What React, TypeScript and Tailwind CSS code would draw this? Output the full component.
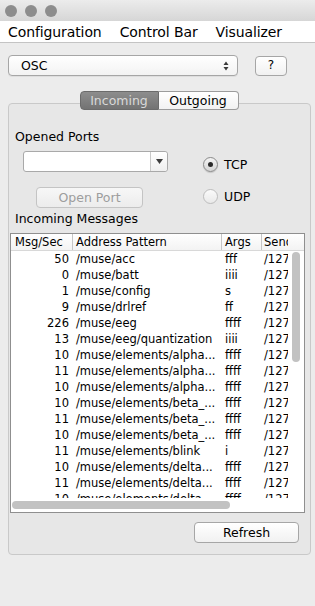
import React from 'react';

const rows: [string, string, string][] = [
  ['50', '/muse/acc', 'fff'],
  ['0', '/muse/batt', 'iiii'],
  ['1', '/muse/config', 's'],
  ['9', '/muse/drlref', 'ff'],
  ['226', '/muse/eeg', 'ffff'],
  ['13', '/muse/eeg/quantization', 'iiii'],
  ['10', '/muse/elements/alpha...', 'ffff'],
  ['11', '/muse/elements/alpha...', 'ffff'],
  ['10', '/muse/elements/alpha...', 'ffff'],
  ['10', '/muse/elements/beta_...', 'ffff'],
  ['11', '/muse/elements/beta_...', 'ffff'],
  ['10', '/muse/elements/beta_...', 'ffff'],
  ['11', '/muse/elements/blink', 'i'],
  ['10', '/muse/elements/delta...', 'ffff'],
  ['11', '/muse/elements/delta...', 'ffff'],
  ['10', '/muse/elements/delta...', 'ffff'],
];

const Radio: React.FC<{ checked?: boolean; label: string }> = ({ checked, label }) => (
  <div className="flex items-center h-[15px]">
    <div
      className={`w-[15px] h-[15px] rounded-full border flex items-center justify-center ${
        checked
          ? 'border-[#8a8a8a] bg-gradient-to-b from-[#f4f4f4] to-[#d6d6d6] shadow-[0_1px_1px_rgba(0,0,0,0.15)]'
          : 'border-[#bdbdbd] bg-gradient-to-b from-[#fbfbfb] to-[#e9e9e9]'
      }`}
    >
      {checked && <div className="w-[5px] h-[5px] rounded-full bg-[#2a2a2a]" />}
    </div>
    <span className="ml-[6px] text-[12.5px] leading-[15px] text-black">{label}</span>
  </div>
);

export default function App() {
  return (
    <div className="w-[315px] h-[606px] overflow-hidden bg-[#ececec] text-black font-['DejaVu_Sans',sans-serif]">
      {/* title bar */}
      <div className="h-[21px] bg-gradient-to-b from-[#ececec] to-[#d6d6d6] flex items-center pl-[5px] gap-[8px]">
        <div className="w-[12px] h-[12px] rounded-full bg-[#8d8d8d]" />
        <div className="w-[12px] h-[12px] rounded-full bg-[#8d8d8d]" />
        <div className="w-[12px] h-[12px] rounded-full bg-[#8d8d8d]" />
      </div>

      {/* menu bar */}
      <div className="h-[22px] bg-white border-b border-[#c4c4c4] flex items-center px-[8px] gap-[18px] text-[14px] leading-[20px] tracking-[-0.1px]">
        <span>Configuration</span>
        <span>Control Bar</span>
        <span>Visualizer</span>
      </div>

      {/* protocol chooser */}
      <div className="flex items-center mt-[12px] ml-[8px]">
        <div className="w-[230px] h-[21px] rounded-[4px] border border-[#a6a6a6] bg-gradient-to-b from-white to-[#f3f3f3] shadow-[0_1px_0_rgba(0,0,0,0.06)] flex items-center pl-[12px] pr-[8px]">
          <span className="text-[12.5px] leading-[15px] flex-1">OSC</span>
          <svg width="6" height="10" viewBox="0 0 6 10">
            <path d="M3 0.5 L5.5 4 L0.5 4 Z" fill="#3a3a3a" />
            <path d="M3 9.5 L5.5 6 L0.5 6 Z" fill="#3a3a3a" />
          </svg>
        </div>
        <div className="ml-[17px] w-[32px] h-[20px] rounded-[4px] border border-[#a6a6a6] bg-gradient-to-b from-white to-[#f1f1f1] flex items-center justify-center text-[12px] leading-[15px]">
          ?
        </div>
      </div>

      {/* tabs */}
      <div className="relative z-10 mt-[15px] ml-[8px] w-[302px] flex justify-center">
        <div className="flex h-[19px] text-[12.5px] leading-[17px]">
          <div className="w-[79px] rounded-l-[4px] border border-[#6b6b6b] bg-gradient-to-b from-[#8d8d8d] to-[#737373] text-[#d9d9d9] flex items-center justify-center">
            Incoming
          </div>
          <div className="w-[80px] rounded-r-[4px] border border-l-0 border-[#9c9c9c] bg-gradient-to-b from-white to-[#f2f2f2] flex items-center justify-center">
            Outgoing
          </div>
        </div>
      </div>

      {/* panel */}
      <div className="-mt-[7px] ml-[8px] w-[303px] rounded-[4px] border border-[#c9c9c9] bg-[#e7e7e7] pt-[25px] pb-[11px] flex flex-col">
        <div className="pl-[6px] text-[12.5px] leading-[16px]">Opened Ports</div>

        <div className="flex mt-[6px]">
          <div className="flex flex-col ml-[14px]">
            <div className="w-[145px] h-[21px] rounded-[3px] border border-[#a9a9a9] bg-white flex">
              <div className="flex-1" />
              <div className="w-[17px] border-l border-[#c9c9c9] bg-gradient-to-b from-white to-[#efefef] rounded-r-[3px] flex items-center justify-center">
                <svg width="7" height="5" viewBox="0 0 7 5">
                  <path d="M0 0 L7 0 L3.5 5 Z" fill="#3c3c3c" />
                </svg>
              </div>
            </div>
            <div className="mt-[15px] ml-[13px] w-[107px] h-[21px] rounded-[4px] border border-[#c4c4c4] bg-gradient-to-b from-[#f7f7f7] to-[#ececec] flex items-center justify-center text-[12.5px] leading-[15px] text-[#9d9d9d]">
              Open Port
            </div>
          </div>
          <div className="flex flex-col ml-[35px] mt-[6px]">
            <Radio checked label="TCP" />
            <div className="mt-[17px]">
              <Radio label="UDP" />
            </div>
          </div>
        </div>

        <div className="pl-[6px] mt-[3px] text-[12.5px] leading-[16px]">Incoming Messages</div>

        {/* table */}
        <div className="relative mt-[6px] ml-[1px] w-[295px] h-[280px] border border-[#8f8f8f] bg-white overflow-hidden text-[11.5px] leading-[16px]">
          <div className="h-[17px] flex border-b border-[#d8d8d8] bg-gradient-to-b from-white to-[#f3f3f3]">
            <div className="w-[62px] pl-[4px] border-r border-[#c6c6c6] shrink-0">Msg/Sec</div>
            <div className="w-[149px] pl-[3px] border-r border-[#c6c6c6] shrink-0">Address Pattern</div>
            <div className="w-[40px] pl-[3px] border-r border-[#c6c6c6] shrink-0">Args</div>
            <div className="w-[26px] pl-[2px] overflow-hidden whitespace-nowrap shrink-0">Sender</div>
          </div>
          {rows.map((r, i) => (
            <div key={i} className="h-[16px] flex whitespace-nowrap">
              <div className="w-[62px] pr-[4px] text-right shrink-0">{r[0]}</div>
              <div className="w-[149px] pl-[3px] shrink-0 overflow-hidden">{r[1]}</div>
              <div className="w-[40px] pl-[3px] shrink-0">{r[2]}</div>
              <div className="w-[26px] pl-[2px] shrink-0 overflow-hidden">/127.0.0.1</div>
            </div>
          ))}

          {/* vertical scrollbar */}
          <div className="absolute right-0 top-[17px] bottom-[14px] w-[16px] bg-white flex justify-center">
            <div className="mt-[1px] w-[8px] h-[110px] rounded-full bg-[#c2c2c2]" />
          </div>
          {/* horizontal scrollbar */}
          <div className="absolute left-0 right-0 bottom-0 h-[14px] bg-white flex items-center">
            <div className="ml-[1px] w-[218px] h-[8px] rounded-full bg-[#c2c2c2]" />
          </div>
        </div>

        <div className="flex justify-end mt-[9px] mr-[11px]">
          <div className="w-[105px] h-[21px] rounded-[4px] border border-[#a6a6a6] bg-gradient-to-b from-white to-[#f1f1f1] flex items-center justify-center text-[12.5px] leading-[15px]">
            Refresh
          </div>
        </div>
      </div>
    </div>
  );
}
